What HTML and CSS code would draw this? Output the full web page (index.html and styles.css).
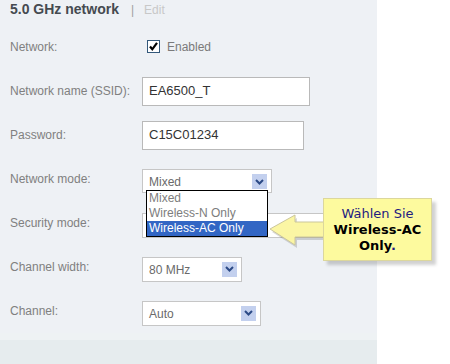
FILE: index.html
```html
<!DOCTYPE html>
<html>
<head>
<meta charset="utf-8">
<link rel="stylesheet" href="styles.css">
</head>
<body>
<div class="page">
  <div class="panel">
    <div class="head">
      <span class="title">5.0 GHz network</span>
      <span class="sep">|</span>
      <span class="edit">Edit</span>
    </div>
    <div class="row">
      <span class="label">Network:</span>
      <span class="check">
        <svg width="13" height="13" viewBox="0 0 13 13"><rect x="0.5" y="0.5" width="12" height="12" fill="#fff" stroke="#33587a"/><path d="M3 6.5 L5.3 9.3 L10 2.8" fill="none" stroke="#000" stroke-width="2.2"/></svg>
        <span class="check-text">Enabled</span>
      </span>
    </div>
    <div class="row">
      <span class="label">Network name (SSID):</span>
      <span class="input w-ssid">EA6500_T</span>
    </div>
    <div class="row">
      <span class="label">Password:</span>
      <span class="input w-pass">C15C01234</span>
    </div>
    <div class="row">
      <span class="label">Network mode:</span>
      <span class="select w-mode">Mixed<span class="arrow"><svg width="9" height="6" viewBox="0 0 9 6"><path d="M1 1 L4.5 4.5 L8 1" fill="none" stroke="#2c4a86" stroke-width="2"/></svg></span>
        <span class="dropdown">
          <span class="opt">Mixed</span>
          <span class="opt">Wireless-N Only</span>
          <span class="opt sel">Wireless-AC Only</span>
        </span>
      </span>
    </div>
    <div class="row">
      <span class="label">Security mode:</span>
      <span class="select w-sec"></span>
    </div>
    <div class="row">
      <span class="label">Channel width:</span>
      <span class="select w-cw">80 MHz<span class="arrow"><svg width="9" height="6" viewBox="0 0 9 6"><path d="M1 1 L4.5 4.5 L8 1" fill="none" stroke="#2c4a86" stroke-width="2"/></svg></span></span>
    </div>
    <div class="row">
      <span class="label">Channel:</span>
      <span class="select w-ch">Auto<span class="arrow"><svg width="9" height="6" viewBox="0 0 9 6"><path d="M1 1 L4.5 4.5 L8 1" fill="none" stroke="#2c4a86" stroke-width="2"/></svg></span></span>
    </div>
    <div class="foot"></div>
  </div>

  <svg class="pointer" width="58" height="38" viewBox="0 0 58 38">
    <polygon points="4,20 29,6 29,13 58,13 58,28 29,28 29,36" fill="rgba(0,0,0,0.15)"/>
    <polygon points="2,17 27,3 27,10 57,10 57,25 27,25 27,33" fill="#fbf6a4" stroke="#cbc69c" stroke-width="1"/>
  </svg>
  <div class="callout">
    <span class="c1">Wählen Sie</span>
    <span class="c2">Wireless-AC</span>
    <span class="c2">Only<span class="dot">.</span></span>
  </div>
</div>
</body>
</html>
```
FILE: styles.css
```css
html, body {
  margin: 0;
  padding: 0;
  background: #fff;
}
body {
  font-family: "Liberation Sans", Arial, sans-serif;
  font-size: 12px;
}
.page {
  position: relative;
  width: 450px;
  height: 364px;
  overflow: hidden;
}
.panel {
  width: 377px;
  height: 364px;
  background: #eef1f5;
  display: flex;
  flex-direction: column;
}
.head {
  flex: none;
  height: 25px;
  box-sizing: border-box;
  padding: 1px 0 0 10px;
  display: flex;
  align-items: baseline;
  line-height: 16px;
}
.title {
  font-size: 14px;
  font-weight: bold;
  color: #454a50;
}
.sep {
  margin-left: 12px;
  color: #a0a0a0;
  font-size: 12px;
}
.edit {
  margin-left: 10px;
  color: #c8c8c8;
  font-size: 12px;
}
.row {
  flex: none;
  height: 44px;
  display: flex;
  align-items: center;
  padding-left: 10px;
}
.label {
  width: 132px;
  flex: none;
  color: #808080;
  font-size: 12px;
}
.check {
  display: flex;
  align-items: center;
  margin-left: 5px;
  margin-top: -1px;
}
.check svg {
  display: block;
}
.check-text {
  margin-left: 7px;
  color: #7a7a7a;
  font-size: 12px;
}
.input {
  box-sizing: border-box;
  height: 29px;
  background: #fff;
  border: 1px solid #b9b9b9;
  padding: 5px 0 0 6px;
  font-size: 13px;
  color: #333;
  line-height: 15px;
}
.w-ssid { width: 168px; }
.w-pass { width: 162px; }
.select {
  position: relative;
  box-sizing: border-box;
  height: 25px;
  margin-top: 4px;
  background: #fff;
  border: 1px solid #c6c6c6;
  padding: 5px 0 0 6px;
  font-size: 12px;
  line-height: 14px;
  color: #6a6a6a;
}
.w-mode { width: 130px; height: 24px; }
.w-sec { width: 200px; height: 25px; }
.w-cw { width: 100px; }
.w-ch { width: 119px; }
.arrow {
  position: absolute;
  right: 4px;
  top: 4px;
  width: 15px;
  height: 15px;
  background: #c3d0ee;
  display: flex;
  align-items: center;
  justify-content: center;
}
.arrow svg {
  display: block;
}
.dropdown {
  position: absolute;
  left: 3px;
  top: 20px;
  width: 122px;
  box-sizing: border-box;
  border: 1px solid #000;
  background: #fff;
  display: flex;
  flex-direction: column;
  z-index: 2;
}
.opt {
  height: 15px;
  line-height: 14px;
  padding-left: 2px;
  color: #7d7d7d;
  font-size: 12px;
  white-space: nowrap;
}
.opt.sel {
  background: #3266c4;
  color: #fff;
  height: 15px;
}
.foot {
  flex: none;
  margin-top: auto;
  height: 31px;
  background: linear-gradient(#eef2f4 0, #eef2f4 7px, #e6ecee 7px, #e6ecee 100%);
}
.pointer {
  position: absolute;
  left: 268px;
  top: 212px;
  z-index: 3;
}
.callout {
  position: absolute;
  left: 323px;
  top: 198px;
  width: 109px;
  height: 63px;
  box-sizing: border-box;
  background: #fdfa9e;
  border: 1px solid #dcd79c;
  box-shadow: 4px 4px 3px rgba(0, 0, 0, 0.18);
  display: flex;
  flex-direction: column;
  align-items: center;
  justify-content: center;
  font-family: "DejaVu Sans", Verdana, sans-serif;
  font-size: 13px;
  line-height: 16px;
  z-index: 4;
}
.c1 {
  color: #1f1a80;
}
.c2 {
  color: #000;
  font-weight: bold;
}
.dot {
  color: #1f1a80;
}
```
